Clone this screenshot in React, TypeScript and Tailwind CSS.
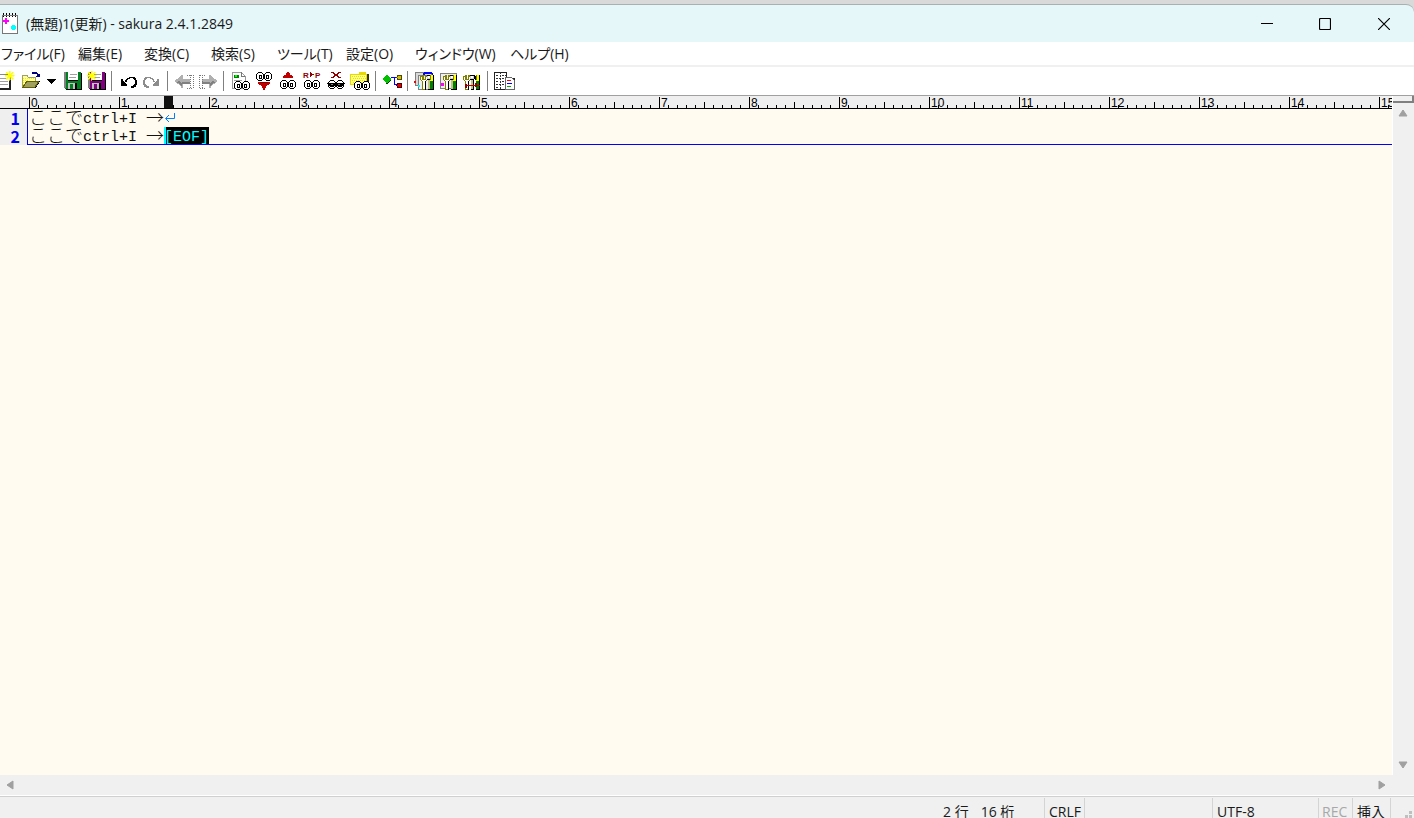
import type { ReactNode } from 'react'

const menus = [
  { label: 'ファイル(F)', width: 'w-[77px]' },
  { label: '編集(E)', width: 'w-[66px]' },
  { label: '変換(C)', width: 'w-[67px]' },
  { label: '検索(S)', width: 'w-[66px]' },
  { label: 'ツール(T)', width: 'w-[69px]' },
  { label: '設定(O)', width: 'w-[69px]' },
  { label: 'ウィンドウ(W)', width: 'w-[95px]' },
  { label: 'ヘルプ(H)', width: 'w-[77px]' },
]

const uiFont = "font-['Open_Sans','Noto_Sans_CJK_JP',sans-serif]"

function Icon({ children }: { children: ReactNode }) {
  return (
    <svg viewBox="0 0 20 20" className="h-5 w-5 shrink-0 overflow-visible" shapeRendering="crispEdges" aria-hidden="true">
      {children}
    </svg>
  )
}

function Tool({ label, wide, children }: { label: string; wide?: boolean; children: ReactNode }) {
  return (
    <button
      type="button"
      aria-label={label}
      className={`flex h-6 shrink-0 items-center justify-center ${wide ? 'w-7' : 'w-6'}`}
    >
      <Icon>{children}</Icon>
    </button>
  )
}

function Separator() {
  return (
    <div className="flex h-5 w-2 shrink-0 pl-[3px]">
      <div className="w-px bg-[#808080]" />
    </div>
  )
}

function Eyes({ x, y }: { x: number; y: number }) {
  return (
    <g transform={`translate(${x} ${y})`}>
      <path
        d="M2 0h4v1h1v1h2v-1h1v-1h4v1h1v1h1v5h-1v1h-1v1h-4v-1h-1v-1h-2v1h-1v1h-4v-1h-1v-1h-1v-5h1v-1h1z"
        fill="#000"
      />
      <path
        d="M2 1h4v1h1v5h-1v1h-4v-1h-1v-5h1zM10 1h4v1h1v5h-1v1h-4v-1h-1v-5h1z"
        fill="#fff"
      />
      <path d="M3 3h3v4h-3zM10 3h3v4h-3z" fill="#000" />
      <path d="M4 4h1v2h-1zM11 4h1v2h-1z" fill="#fff" />
    </g>
  )
}

function Spark({ x, y }: { x: number; y: number }) {
  return (
    <path
      transform={`translate(${x} ${y})`}
      d="M4 0h1v3h1v-1h1v-1h1v1h-1v1h-1v1h3v1h-3v1h1v1h1v1h-1v-1h-1v-1h-1v3h-1v-3h-1v1h-1v1h-1v-1h1v-1h1v-1h-3v-1h3v-1h-1v-1h-1v-1h1v1h1v1h1z"
      fill="#ff0"
      stroke="#ff0"
      strokeWidth="0.6"
    />
  )
}

function Floppy({ color }: { color: string }) {
  return (
    <g transform="translate(1 0)">
      <path d="M2 2h17v17h-16l-1-1z" fill="#000" />
      <path d="M1 1h17v17h-16l-1-1z" fill={color} />
      <path d="M1 1h2v16h-2z" fill="#808080" />
      <path d="M5 1h10v9h-10z" fill="#fff" />
      <path d="M7 3h7v1h-7zM6 6h7v1h-7z" fill="#a0a0a0" />
      <path d="M5 9h10v1h-10z" fill="#000" />
      <path d="M5 12h9v6h-9z" fill="#c0c0c0" />
      <path d="M7 13h3v5h-3z" fill={color} />
      <path d="M12 12h2v6h-2z" fill="#000" />
    </g>
  )
}

function TurnArrow({ color }: { color: string }) {
  return (
    <>
      <path d="M3 8h2v2h1v1h1v1h1v1h1v2h-6z" fill={color} />
      <path
        d="M7 11h2v-2h1v-1h2v-1h3v1h1v1h1v4h-1v1h-1v1h-2v2h3v-1h2v-2h1v-5h-1v-2h-1v-1h-6v1h-2v1h-1z"
        fill={color}
      />
    </>
  )
}

function BlockArrow() {
  return (
    <>
      <path d="M7 4h2v4h7v5h-7v4h-2v-2h-1v-1h-1v-1h-2v-1h-1v-1h-1v-2h1v-1h2v-1h1v-1h1v-1h1z" fill="#b0b0b0" />
      <path d="M2 11h1v1h2v1h1v1h1v1h1v-2h8v-2h-8v1h-1v-1h-1v-1z" fill="#808080" />
      <path d="M13 4h6v13h-6" fill="none" stroke="#777" strokeDasharray="1 1" />
      <path d="M16 4v13" stroke="#777" strokeDasharray="1 1" />
    </>
  )
}

// wrench with a small hammer beside it
function Wrench({ x }: { x: number }) {
  return (
    <g transform={`translate(${x} 0)`}>
      <path d="M2 5h2v-1h2v4h1v-4h2v1h1v4h-1v1h-1v9h-4v-9h-1v-1h-1z" fill="#808000" />
      <path d="M3 6h1v3h4v-3h1v3h-1v1h-1v8h-2v-8h-1v-1h-1z" fill="#fff" />
      <path d="M7 10h1v9h-1z" fill="#000" />
      <path d="M9 4h5v1h1v4h-1v-1h-1v11h-3v-10h-1z" fill="#000" />
      <path d="M9 5h4v3h-4z" fill="#d0d0d0" />
      <path d="M10 9h2v9h-2z" fill="#c0c080" />
      <path d="M10 5h2v2h-2z" fill="#fff" />
    </g>
  )
}

function Pencil({ x }: { x: number }) {
  return (
    <g transform={`translate(${x} 0)`}>
      <path d="M0 4h4v15h-4z" fill="#000" />
      <path d="M0 4h3v6h-3z" fill="#ff0" />
      <path d="M0 10h3v8h-3z" fill="#008000" />
      <path d="M0 4h1v5h-1z" fill="#808000" />
    </g>
  )
}

function Toolbar() {
  return (
    <div role="toolbar" aria-label="ツールバー" className="flex h-7 shrink-0 items-center overflow-hidden bg-white">
      <div className="-ml-2 flex items-center">
        <Tool label="新規作成">
          <path d="M3 3h10l4 4v11h-14z" fill="#000" />
          <path d="M2 3h10l4 4v10h-14z" fill="#fff" stroke="#888" />
          <path d="M16 7v11h-14" fill="none" stroke="#222" strokeWidth="2" />
          <path d="M5 7h7M5 10h9M5 13h9" stroke="#a0a0a0" />
          <Spark x={11} y={0} />
        </Tool>
        <Tool label="開く" wide>
          <path d="M2 4h5l1 2h7v10h-13z" fill="#ffffa0" stroke="#a0a060" />
          <path d="M3 7h11M3 9h5M3 11h4M3 13h3" stroke="#ee0" strokeDasharray="1 1" />
          <path d="M2 17h14l4-7h-2l-4 7z" fill="#000" />
          <path d="M3 16l4-6h12l-4 6z" fill="#a0a060" stroke="#606000" />
          <path d="M11 2h1v-1h5v1h1v1h2v3h-4v-1h1v-2h-5z" fill="#000080" />
        </Tool>
        <button type="button" aria-label="最近使ったファイル" className="flex h-6 w-4 shrink-0 items-center">
          <svg viewBox="0 0 16 20" className="h-5 w-4" shapeRendering="crispEdges">
            <path d="M3 8h9v1h-1v1h-1v1h-1v1h-1v1h-1v-1h-1v-1h-1v-1h-1v-1h-1z" fill="#000" />
          </svg>
        </button>
        <Tool label="上書き保存">
          <Floppy color="#008020" />
        </Tool>
        <Tool label="名前を付けて保存">
          <Floppy color="#800080" />
          <Spark x={1} y={0} />
        </Tool>
        <Separator />
        <Tool label="元に戻す">
          <TurnArrow color="#000" />
        </Tool>
        <Tool label="やり直し">
          <g transform="matrix(-1 0 0 1 20 0)">
            <TurnArrow color="#8c8c8c" />
          </g>
        </Tool>
        <Separator />
        <Tool label="前の位置">
          <BlockArrow />
        </Tool>
        <Tool label="次の位置">
          <g transform="matrix(-1 0 0 1 20 0)">
            <BlockArrow />
          </g>
        </Tool>
        <Separator />
        <Tool label="検索">
          <path d="M2 1h9l4 4v12h-13z" fill="#fff" stroke="#999" />
          <path d="M11 1v4h4" fill="none" stroke="#777" />
          <path d="M4 4h5v3h-5z" fill="#008000" />
          <path d="M5 4h2v2h-2z" fill="#0f0" />
          <path d="M4 9h8M4 12h3" stroke="#a0a0a0" />
          <Eyes x={4} y={10} />
        </Tool>
        <Tool label="次を検索">
          <Eyes x={2} y={1} />
          <path d="M4 11h12v2h-1v1h-2v1h-1v2h-1v2h-2v-2h-1v-2h-1v-1h-2v-1h-1z" fill="#c00000" />
          <path d="M6 11h8v1h-8z" fill="#800000" />
        </Tool>
        <Tool label="前を検索">
          <path d="M9 1h2v1h1v2h2v1h1v2h-10v-2h1v-1h2v-2h1z" fill="#c00000" />
          <Eyes x={2} y={9} />
        </Tool>
        <Tool label="置換">
          <path d="M8 1h1v1h1v1h2v1h-2v1h-1v1h-1z" fill="#900000" />
          <text x="1" y="7" fontSize="8" fontWeight="700" fontFamily="Liberation Sans, sans-serif" fill="#900000">
            R
          </text>
          <text x="13" y="7" fontSize="8" fontWeight="700" fontFamily="Liberation Sans, sans-serif" fill="#900000">
            P
          </text>
          <Eyes x={2} y={9} />
        </Tool>
        <Tool label="検索マークの切替え">
          <path
            d="M5 1h3v1h1v1h2v-1h1v-1h3v1h-2v1h-1v2h1v1h2v1h-3v-1h-1v-1h-2v1h-1v1h-3v-1h2v-1h1v-2h-1v-1h-2z"
            fill="#900000"
          />
          <Eyes x={2} y={9} />
          <path d="M1 12h18v1h-2v2h-1v1h-4v-1h-1v-1h-2v1h-1v1h-4v-1h-1v-2h-2z" fill="#000" />
          <path d="M5 13h2v1h-2zM12 13h2v1h-2z" fill="#808080" />
        </Tool>
        <Tool label="Grep">
          <path d="M0 3h9v-2h7v2h2v11h-18z" fill="#e8d800" />
          <path d="M1 4h15v9h-15z" fill="#ffff80" />
          <path d="M2 5h13M3 7h13M2 9h13M3 11h12" stroke="#e8e000" strokeDasharray="1 1" />
          <path d="M17 3h2v10h-2z" fill="#303000" />
          <Eyes x={4} y={10} />
        </Tool>
        <Separator />
        <Tool label="アウトライン解析">
          <path d="M4 4h2v1h1v1h1v1h1v2h-1v1h-1v1h-1v1h-2v-1h-1v-1h-1v-1h-1v-2h1v-1h1v-1h1z" fill="#00c000" />
          <path d="M4 12h2v-1h1v-1h1v-1h1v1h-1v1h-1v1h-1v1h-2z" fill="#004000" />
          <path d="M9 6h6v1h-2v6h3v1h-4v-7h-3z" fill="#00f" />
          <circle cx="17.5" cy="6.5" r="2.5" fill="#d0c000" stroke="#504800" />
          <circle cx="17.5" cy="14.5" r="2.5" fill="#e00000" stroke="#500000" />
        </Tool>
        <Separator />
        <Tool label="タイプ別設定一覧">
          <path d="M1 1h16v13h-16z" fill="#d8d8d8" stroke="#808080" />
          <path d="M4 4h14v14h-14z" fill="#eee" stroke="#808080" />
          <path d="M10 1h8v1h1v2h-1v-1h-7v1h-2v-2h1z" fill="#00f" />
          <path d="M0 10h2v2h-2z" fill="#f00" />
          <path d="M4 14h2v2h-2z" fill="#0ff" />
          <Wrench x={4} />
          <Pencil x={16} />
        </Tool>
        <Tool label="タイプ別設定">
          <path d="M2 2h16v15h-16z" fill="#eee" stroke="#808080" />
          <path d="M3 12h3v3h-3z" fill="#f0f" />
          <Wrench x={3} />
          <Pencil x={15} />
        </Tool>
        <Tool label="共通設定">
          <Wrench x={-1} />
          <Pencil x={14} />
          <path d="M3 14h15v1h-15z" fill="#c00000" />
          <path d="M3 13h2v4h-2zM13 12h2v4h-2z" fill="#900000" />
        </Tool>
        <Separator />
        <Tool label="フォント設定">
          <path d="M0 1h12v17h-12z" fill="#fff" stroke="#222" />
          <path d="M6 1v17M2 4h3M8 4h4M2 7h9M2 10h3M8 10h3M2 13h9M2 16h3" stroke="#333" strokeDasharray="2 1" />
          <path d="M12 7h9v12h-9z" fill="#222" />
          <path d="M11 6h6l3 3v9h-9z" fill="#fff" stroke="#666" />
          <path d="M13 9h4" stroke="#f00" />
          <path d="M13 12h5" stroke="#00f" />
          <path d="M13 15h4" stroke="#0a0" />
        </Tool>
      </div>
    </div>
  )
}

function TitleBar() {
  return (
    <header className="flex h-[38px] shrink-0 items-center rounded-tr-lg border-t border-[#a8b0b0] bg-[#e6f7f9]">
      <svg viewBox="0 0 18 22" className="h-[22px] w-[18px] shrink-0" shapeRendering="crispEdges" aria-hidden="true">
        <path d="M3 3h15v18h-15z" fill="#222" />
        <path d="M2 2h15v18h-15z" fill="#fff" stroke="#777" />
        <path d="M3 0v4M6 0v4M9 0v4M12 0v4M15 0v4" stroke="#000" strokeDasharray="2 1" />
        <path d="M5 5h2v2h2v2h-2v2h-2v-2h-2v-2h2z" fill="#f0f" />
        <path d="M12 12h3v1h1v3h-1v1h-3v-1h-1v-3h1z" fill="#0ff" />
      </svg>
      <h1 className="grow pl-2 text-[14px] font-normal text-[#1a1a1a]">(無題)1(更新) - sakura 2.4.1.2849</h1>
      <button type="button" aria-label="最小化" className="flex h-full w-[58px] items-center justify-center">
        <svg viewBox="0 0 12 12" className="h-3 w-3" shapeRendering="crispEdges">
          <path d="M0 5h12v1h-12z" />
        </svg>
      </button>
      <button type="button" aria-label="最大化" className="flex h-full w-[58px] items-center justify-center">
        <svg viewBox="0 0 12 12" className="h-3 w-3">
          <rect x="0.5" y="0.5" width="11" height="11" rx="1" fill="none" stroke="#000" strokeWidth="1.2" />
        </svg>
      </button>
      <button type="button" aria-label="閉じる" className="flex h-full w-[60px] items-center justify-center">
        <svg viewBox="0 0 12 12" className="h-3 w-3">
          <path d="M0 0L12 12M12 0L0 12" stroke="#000" strokeWidth="1.2" />
        </svg>
      </button>
    </header>
  )
}

function Ruler() {
  return (
    <div className="flex h-[13px] shrink-0 overflow-hidden border-b border-black bg-[#efefef] pl-[29px]">
      {Array.from({ length: 24 }, (_, i) => (
        <div key={i} className="relative h-3 w-[90px] shrink-0">
          <svg viewBox="0 0 90 12" className="h-3 w-[90px]" shapeRendering="crispEdges" aria-hidden="true">
            <path
              d="M0 1h1v11h-1zM9 9h1v3h-1zM18 9h1v3h-1zM27 9h1v3h-1zM36 9h1v3h-1zM45 6h1v6h-1zM54 9h1v3h-1zM63 9h1v3h-1zM72 9h1v3h-1zM81 9h1v3h-1z"
              fill="#000"
            />
            {i === 1 && <path d="M45 0h9v12h-9z" fill="#111" />}
          </svg>
          <span className="absolute top-px left-[2px] font-['Liberation_Sans',Arial,sans-serif] text-[12px] leading-3 text-black">
            {i}
          </span>
        </div>
      ))}
    </div>
  )
}

function Wide({ children }: { children: ReactNode }) {
  return (
    <span className="font-['Noto_Sans_CJK_JP',sans-serif] text-[18px] leading-[14px] font-light">{children}</span>
  )
}

function Line({ number, children }: { number: number; children: ReactNode }) {
  return (
    <div className="flex h-[18px]">
      <div className="w-7 shrink-0 border-r border-[#0000e0] bg-[#efefef] pr-[7px] text-right font-['Noto_Sans_CJK_JP',sans-serif] text-[16px] leading-[18px] font-bold text-[#0000f0]">
        {number}
      </div>
      <div className="flex items-start pl-px leading-[22px] whitespace-pre text-[#111]">
        <Wide>ここで</Wide>
        <span>ctrl+I </span>
        <Wide>→</Wide>
        {children}
      </div>
    </div>
  )
}

function Editor() {
  return (
    <div className="flex min-w-0 grow flex-col bg-[#fffbf0]">
      <Ruler />
      <div
        role="textbox"
        aria-multiline="true"
        aria-label="(無題)1"
        tabIndex={0}
        className="grow overflow-hidden font-['Liberation_Mono','Noto_Sans_CJK_JP',monospace] text-[15px] outline-none"
      >
        <Line number={1}>
          <svg viewBox="0 0 12 18" className="h-[18px] w-3" aria-label="改行">
            <path d="M10.500 4v5.500H2M5 6L1.500 9.500L5 13" fill="none" stroke="#0080ff" />
          </svg>
        </Line>
        <div className="relative">
          <Line number={2}>
            <span className="h-[18px] bg-black text-[#00ffff] shadow-[inset_2px_0_0_#00ffff]">[EOF]</span>
          </Line>
          {/* cursor line */}
          <div className="absolute right-0 bottom-0 left-7 h-px bg-[#0000ff]" />
        </div>
      </div>
    </div>
  )
}

function Triangle({ d, label }: { d: string; label: string }) {
  return (
    <button type="button" aria-label={label} className="flex h-5 w-5 items-center justify-center">
      <svg viewBox="0 0 10 10" className="h-[10px] w-[10px]">
        <path d={d} fill="#a0a0a0" stroke="#a0a0a0" strokeLinejoin="round" />
      </svg>
    </button>
  )
}

function StatusBar() {
  return (
    <footer className="flex h-[22px] shrink-0 justify-end overflow-hidden border-t border-[#d0d0d0] bg-[#f0f0f0] pt-px text-[14px] leading-[28px] whitespace-pre text-[#1a1a1a]">
      <div className="flex w-[102px] gap-3 border-r border-[#d4d4d4]">
        <span>2 行</span>
        <span>16 桁</span>
      </div>
      <div className="w-10 border-r border-[#d4d4d4] pl-1">CRLF</div>
      <div className="w-32 border-r border-[#d4d4d4]" />
      <div className="w-[106px] border-r border-[#d4d4d4] pl-1">UTF-8</div>
      <div className="w-[34px] border-r border-[#d4d4d4] pl-[3px] text-[#a8a8a8]">REC</div>
      <div className="w-[38px] border-r border-[#d4d4d4] pl-1">挿入</div>
      <div className="flex w-[23px] items-end justify-end">
        <svg viewBox="0 0 9 7" className="h-[7px] w-[9px]" shapeRendering="crispEdges" aria-hidden="true">
          <path d="M4 0h3v3h-3zM0 4h3v3h-3zM4 4h3v3h-3z" fill="#bfbfbf" />
        </svg>
      </div>
    </footer>
  )
}

export default function App() {
  return (
    <div className={`flex h-screen flex-col overflow-hidden bg-[#d9d9d9] pt-1 ${uiFont}`}>
      <TitleBar />
      <nav
        aria-label="メニュー"
        className="flex h-[25px] shrink-0 items-center border-b-2 border-[#f0f0f0] bg-white pl-px text-[14px] text-[#1a1a1a]"
      >
        {menus.map((menu) => (
          <button
            key={menu.label}
            type="button"
            className={`shrink-0 text-left whitespace-nowrap [font-feature-settings:'palt'] ${menu.width}`}
          >
            {menu.label}
          </button>
        ))}
      </nav>
      <Toolbar />
      <main className="flex min-h-0 grow border-t border-[#a0a0a0] bg-[#f0f0f0]">
        <Editor />
        <div className="flex w-[22px] shrink-0 flex-col border-l border-white">
          <div className="h-[7px] w-full shrink-0 border-r-2 border-b-2 border-[#808080] bg-[#f0f0f0]" />
          <Triangle label="上へスクロール" d="M5 2L9 8H1z" />
          <div className="grow" />
          <Triangle label="下へスクロール" d="M1 2H9L5 8z" />
        </div>
      </main>
      <div className="flex h-[21px] shrink-0 items-center justify-between border-b border-white bg-[#f0f0f0] pr-[22px]">
        <Triangle label="左へスクロール" d="M8 1V9L2 5z" />
        <Triangle label="右へスクロール" d="M2 1L8 5L2 9z" />
      </div>
      <StatusBar />
    </div>
  )
}
